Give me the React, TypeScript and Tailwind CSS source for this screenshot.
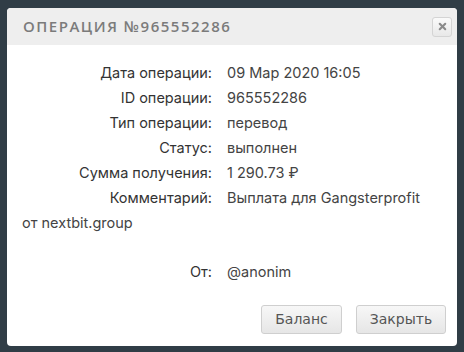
import { X } from "lucide-react";

const rows = [
  { label: "Дата операции:", value: "09 Мар 2020 16:05" },
  { label: "ID операции:", value: "965552286" },
  { label: "Тип операции:", value: "перевод" },
  { label: "Статус:", value: "выполнен" },
  { label: "Сумма получения:", value: "1 290.73 ₽" },
  { label: "Комментарий:", value: "Выплата для Gangsterprofit" },
];

function Row({ label, value }: { label: string; value: string }) {
  return (
    <div className="flex h-[25px] items-center">
      <span className="w-[190px] shrink-0 text-right text-[#333]">{label}</span>
      <span className="ml-[15px] text-[#444]">{value}</span>
    </div>
  );
}

export default function App() {
  return (
    <div className="h-[352px] w-[464px] bg-[#303d46] px-[7px] pt-[8px]">
      <div className="h-[338px] overflow-hidden rounded-[4px] bg-white">
        {/* Header */}
        <div className="flex h-[37px] items-center justify-between bg-[#eeeeee] pl-[16px] pr-[5px]">
          <span
            className="text-[15px] font-semibold tracking-[1.5px] text-[#7b7b7b]"
            style={{ fontFamily: '"Open Sans", sans-serif' }}
          >
            ОПЕРАЦИЯ №965552286
          </span>
          <button className="flex h-[20px] w-[20px] items-center justify-center rounded-[3px] border border-[#d4d4d4] bg-gradient-to-b from-[#fafafa] to-[#e8e8e8]">
            <X className="h-[11px] w-[11px] text-[#8a8a8a]" strokeWidth={4.5} />
          </button>
        </div>

        {/* Body */}
        <div
          className="px-[15px] pt-[15px] text-[14.5px]"
          style={{ fontFamily: "Inter, sans-serif" }}
        >
          {rows.map((r) => (
            <Row key={r.label} label={r.label} value={r.value} />
          ))}
          <div className="flex h-[25px] items-center text-[#444]">от nextbit.group</div>
          <div className="h-[24px]" />
          <Row label="От:" value="@anonim" />
        </div>

        {/* Footer */}
        <div
          className="mt-[21px] flex justify-end gap-[14px] pr-[11px]"
          style={{ fontFamily: '"DejaVu Sans", Verdana, sans-serif' }}
        >
          <button className="h-[29px] w-[81px] rounded-[3px] border border-[#cfcfcf] bg-gradient-to-b from-[#f7f7f7] to-[#e6e6e6] text-[14px] text-[#555]">
            Баланс
          </button>
          <button className="h-[29px] w-[90px] rounded-[3px] border border-[#cfcfcf] bg-gradient-to-b from-[#f7f7f7] to-[#e6e6e6] text-[14px] text-[#555]">
            Закрыть
          </button>
        </div>
      </div>
    </div>
  );
}
